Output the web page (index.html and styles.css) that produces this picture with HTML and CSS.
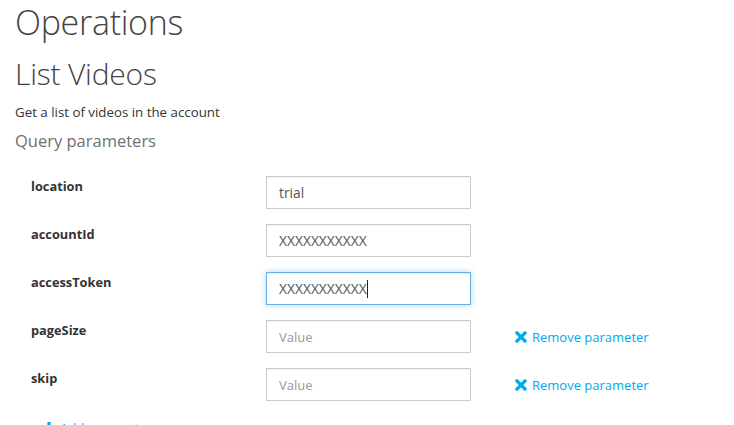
FILE: index.html
```html
<!DOCTYPE html>
<html>
<head>
<meta charset="utf-8">
<link rel="stylesheet" href="styles.css">
</head>
<body>
<div class="page">
  <h1 class="title">Operations</h1>
  <h2 class="op-name">List Videos</h2>
  <p class="desc">Get a list of videos in the account</p>
  <h3 class="section">Query parameters</h3>
  <div class="params">
    <div class="row">
      <div class="label">location</div>
      <input class="field" type="text" value="trial">
    </div>
    <div class="row">
      <div class="label">accountId</div>
      <input class="field" type="text" value="XXXXXXXXXXX">
    </div>
    <div class="row">
      <div class="label">accessToken</div>
      <div class="field focused">XXXXXXXXXXX<span class="caret"></span></div>
    </div>
    <div class="row">
      <div class="label">pageSize</div>
      <input class="field" type="text" placeholder="Value">
      <a class="remove" href="#"><svg class="x" width="12" height="12" viewBox="0 0 12 12"><path d="M2 2L10 10M10 2L2 10" stroke="#00abec" stroke-width="3.2" stroke-linecap="square"/></svg>Remove parameter</a>
    </div>
    <div class="row">
      <div class="label">skip</div>
      <input class="field" type="text" placeholder="Value">
      <a class="remove" href="#"><svg class="x" width="12" height="12" viewBox="0 0 12 12"><path d="M2 2L10 10M10 2L2 10" stroke="#00abec" stroke-width="3.2" stroke-linecap="square"/></svg>Remove parameter</a>
    </div>
    <div class="add-row">
      <a class="add" href="#"><svg class="plus" width="12" height="12" viewBox="0 0 12 12"><path d="M6 0V12M0 6H12" stroke="#00abec" stroke-width="3.2"/></svg>Add parameter</a>
    </div>
  </div>
</div>
</body>
</html>
```
FILE: styles.css
```css
html, body {
  margin: 0;
  padding: 0;
  background: #fff;
}
body {
  font-family: "Open Sans", "Noto Sans", sans-serif;
  color: #333;
  overflow: hidden;
}
.page {
  padding: 2px 0 0 15px;
}
.title {
  margin: 0;
  font-size: 34px;
  font-weight: 300;
  line-height: 40px;
  color: #444;
  letter-spacing: -0.3px;
}
.op-name {
  margin: 14px 0 0;
  font-size: 30px;
  font-weight: 300;
  line-height: 36px;
  color: #444;
  letter-spacing: -0.2px;
}
.desc {
  margin: 11px 0 0;
  font-size: 13.3px;
  line-height: 18px;
  color: #333;
}
.section {
  margin: 9px 0 0;
  font-size: 16.5px;
  font-weight: 400;
  line-height: 22px;
  color: #707070;
}
.params {
  margin-top: 24px;
  padding-left: 16px;
}
.row {
  display: flex;
  align-items: flex-start;
  height: 33px;
  margin-bottom: 15px;
}
.label {
  width: 235px;
  flex: none;
  font-size: 12.8px;
  font-weight: 700;
  color: #333;
  line-height: 18px;
  padding-top: 1px;
}
.field {
  box-sizing: border-box;
  width: 205px;
  height: 33px;
  flex: none;
  margin: 0;
  padding: 0 12px;
  border: 1px solid #ccc;
  border-radius: 0;
  font-family: inherit;
  font-size: 13.8px;
  color: #555;
  background: #fff;
  outline: none;
  box-shadow: inset 0 1px 1px rgba(0,0,0,0.05);
}
.field::placeholder {
  color: #999;
  font-size: 13px;
}
div.field {
  display: flex;
  align-items: center;
}
.focused {
  border-color: #66afe9;
  box-shadow: inset 0 1px 1px rgba(0,0,0,0.075), 0 0 6px rgba(102,175,233,0.5);
}
.caret {
  display: inline-block;
  width: 1px;
  height: 18px;
  background: #222;
}
.remove {
  margin-left: 44px;
  margin-top: 8px;
  font-size: 13px;
  line-height: 18px;
  color: #00abec;
  text-decoration: none;
  display: flex;
  align-items: center;
}
.x {
  margin-right: 5px;
  flex: none;
}
.add-row {
  padding-left: 12px;
  padding-top: 1px;
}
.add {
  font-size: 13px;
  line-height: 18px;
  color: #00abec;
  text-decoration: none;
  display: inline-flex;
  align-items: center;
}
.plus {
  margin-right: 5px;
}
```
